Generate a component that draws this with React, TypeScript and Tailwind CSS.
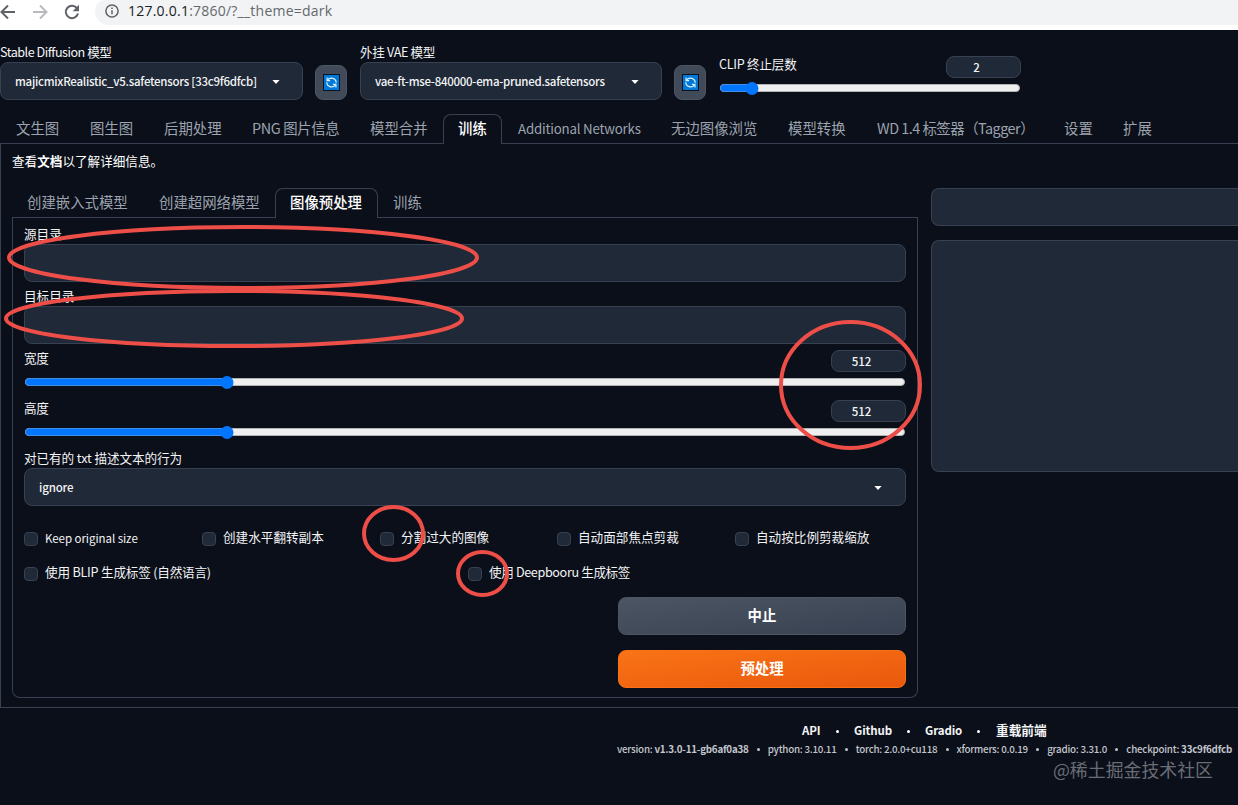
import React from 'react';
import { clsx } from 'clsx';

const Caret = ({ className }: { className?: string }) => (
  <svg viewBox="0 0 8 4" className={clsx('h-1 w-2 shrink-0 fill-white', className)}>
    <path d="M.4 0h7.2L4 4z" />
  </svg>
);

const RefreshButton = () => (
  <button className="flex h-[35px] w-8 shrink-0 items-start justify-center rounded-lg border border-[#4b5563] bg-[#414a58] pt-2">
    <svg viewBox="0 0 17 17" className="h-[17px] w-[17px]">
      <rect x="0.5" y="0.5" width="16" height="16" fill="#0078d7" stroke="#07111f" />
      <g fill="none" stroke="#d9f1ff" strokeWidth="1.2">
        <path d="M4.6 6.2A4.7 4.7 0 0 1 13.2 8.8M12.4 10.8A4.7 4.7 0 0 1 3.8 8.2" />
        <path d="M4.1 3.6v3h3M12.9 13.4v-3H9.9" />
      </g>
    </svg>
  </button>
);

const Label = ({ children, className }: { children: React.ReactNode; className?: string }) => (
  <div className={clsx('whitespace-nowrap text-[12.6px] text-[#f3f4f6]', className)}>{children}</div>
);

const Select = ({ value, className, caret }: { value: string; className?: string; caret: string }) => (
  <div className={clsx('flex h-[38px] items-center justify-between rounded-lg border border-[#374151] bg-[#1f2937] pl-3.5 text-[#f3f4f6]', caret)}>
    <span className={clsx('whitespace-nowrap pt-px text-[11.5px] font-medium', className)}>{value}</span>
    <Caret className="mt-0.5" />
  </div>
);

const Slider = ({ label, value, percent, className }: { label: string; value: string; percent: number; className?: string }) => (
  <div className={className}>
    <div className="flex h-[22px] items-start justify-between">
      <Label className="leading-4 tracking-[-0.25px]">{label}</Label>
      <div className="h-[22px] w-[75px] rounded-lg border border-[#374151] bg-[#1f2937] pr-3.5 text-center text-[11.5px] font-medium leading-5 text-[#f3f4f6]">
        {value}
      </div>
    </div>
    <div className="relative mx-px mt-1.5 h-2 rounded-full border border-[#b2b2b2] bg-[#efefef]">
      <div className="absolute -inset-y-px -left-px rounded-full border border-[#3f8fe8] bg-[#0075ff]" style={{ width: `${percent}%` }} />
      <div className="absolute -top-[3.5px] h-[13px] w-[13px] -translate-x-1/2 rounded-full bg-[#0075ff]" style={{ left: `${percent}%` }} />
    </div>
  </div>
);

const Checkbox = ({ label, className, text = 'text-[12.6px]' }: { label: string; className?: string; text?: string }) => (
  <div className={clsx('flex h-[15px] min-w-0 items-center', className)}>
    <span className="h-3.5 w-3.5 shrink-0 rounded-[4px] border border-[#374151] bg-[#1f2937]" />
    <span className={clsx('-mt-[3px] ml-[7px] whitespace-nowrap leading-4 text-[#f3f4f6]', text)}>{label}</span>
  </div>
);

const tabs = [
  { name: '文生图', cls: 'w-[75px] pl-4' },
  { name: '图生图', cls: 'w-[74px] pl-[15px]' },
  { name: '后期处理', cls: 'w-[88px] pl-[15px]' },
  { name: 'PNG 图片信息', cls: 'w-[118px] pl-[15px] tracking-[-0.35px]' },
  { name: '模型合并', cls: 'w-[88px] pl-[15px]' },
  { name: '训练', cls: 'w-[59px]', active: true },
  { name: 'Additional Networks', cls: 'w-[154px] pl-4 pt-px text-[13.3px] tracking-[-0.2px]' },
  { name: '无边图像浏览', cls: 'w-[117px] pl-[15px]' },
  { name: '模型转换', cls: 'w-[88px] pl-[15px]' },
  { name: 'WD 1.4 标签器（Tagger）', cls: 'w-[188px] pl-4 tracking-[-0.5px]' },
  { name: '设置', cls: 'w-[59px] pl-[15px]' },
  { name: '扩展', cls: 'flex-1 pl-[15px]' },
];

const trainTabs = [
  { name: '创建嵌入式模型', cls: 'w-[132px] pl-[15px]' },
  { name: '创建超网络模型', cls: 'w-[131px] pl-[15px]' },
  { name: '图像预处理', cls: 'w-[103px]', active: true },
  { name: '训练', cls: 'flex-1 pl-[15px]' },
];

const TabNav = ({ items }: { items: { name: string; cls: string; active?: boolean }[] }) => (
  <div className="flex h-[30px] text-[14.4px]">
    {items.map((tab, i) => (
      <div
        key={i}
        className={clsx(
          'shrink-0 whitespace-nowrap border-[#374151]',
          tab.cls,
          tab.active ? 'rounded-t-lg border border-b-0 pl-3.5 font-medium leading-[26px] text-white' : 'border-b leading-7 text-[#9ca3af]'
        )}
      >
        {tab.name}
      </div>
    ))}
  </div>
);

const links = [
  { name: 'API', cls: 'w-[52px]' },
  { name: 'Github', cls: 'w-[71px]' },
  { name: 'Gradio', cls: 'w-[70px]' },
];

const versions = [
  ['version: ', 'v1.3.0-11-gb6af0a38'],
  ['python: 3.10.11'],
  ['torch: 2.0.0+cu118'],
  ['xformers: 0.0.19'],
  ['gradio: 3.31.0'],
  ['checkpoint: ', '33c9f6dfcb'],
];

const BrowserBar = () => (
  <div className="flex h-[30px] bg-white">
    <div className="flex h-[23px] w-[95px] items-center gap-4 text-[#5f6368]">
      <svg viewBox="0 0 16 16" className="h-4 w-4 fill-none stroke-current stroke-2">
        <path d="M15 8H2M8 1.5 1.5 8 8 14.5" />
      </svg>
      <svg viewBox="0 0 16 16" className="h-4 w-4 fill-none stroke-[#b8babd] stroke-2">
        <path d="M1 8h13M8 1.5 14.5 8 8 14.5" />
      </svg>
      <svg viewBox="0 0 16 16" className="h-4 w-4 fill-none stroke-current stroke-2">
        <path d="M13.2 4.5A6.2 6.2 0 1 0 14 9.6" />
        <path className="fill-current stroke-none" d="M15 .8v6.4H8.6z" />
      </svg>
    </div>
    <div className="flex h-[25px] flex-1 items-center rounded-bl-[14px] rounded-tl-[10px] bg-[#f1f3f4] pb-[3px] pl-[10px]">
      <svg viewBox="0 0 14 14" className="h-3.5 w-3.5 fill-none stroke-[#5f6368] stroke-[1.5]">
        <circle cx="7" cy="7" r="6.1" />
        <path d="M7 6.2v4M7 3.6v1.5" />
      </svg>
      <span className="-mt-0.5 ml-[9px] font-['Open_Sans',sans-serif] text-[14px] tracking-[0.23px] text-[#65696d]">
        <span className="text-[#202124]">127.0.0.1</span>:7860/?__theme=dark
      </span>
    </div>
  </div>
);

const QuickSettings = () => (
  <div className="flex h-[84px]">
    <div className="w-[303px] pt-3.5">
      <Label className="h-[18px] leading-4 tracking-[-0.48px]">Stable Diffusion 模型</Label>
      <Select value="majicmixRealistic_v5.safetensors [33c9f6dfcb]" caret="pr-[22px]" className="tracking-[-0.26px]" />
    </div>
    <div className="ml-3 pt-[35px]"><RefreshButton /></div>
    <div className="ml-[13px] w-[302px] pt-3.5">
      <Label className="h-[18px] leading-4 tracking-[-0.35px]">外挂 VAE 模型</Label>
      <Select value="vae-ft-mse-840000-ema-pruned.safetensors" caret="pr-[22px]" className="tracking-[-0.28px]" />
    </div>
    <div className="ml-3 pt-[35px]"><RefreshButton /></div>
    <Slider label="CLIP 终止层数" value="2" percent={10.5} className="ml-[13px] w-[302px] pt-[26px]" />
  </div>
);

const PreprocessForm = () => (
  <div className="h-[480px] rounded-b-lg border border-t-0 border-[#374151] px-[11px] pt-2">
    <Label className="h-[18px] leading-4">源目录</Label>
    <div className="h-[38px] rounded-lg border border-[#374151] bg-[#1f2937]" />
    <Label className="mt-1.5 h-[18px] leading-4">目标目录</Label>
    <div className="h-[38px] rounded-lg border border-[#374151] bg-[#1f2937]" />
    <Slider label="宽度" value="512" percent={22.9} className="mt-1.5" />
    <Slider label="高度" value="512" percent={22.9} className="mt-3.5" />
    <Label className="mt-3.5 h-[18px] leading-4 tracking-[-0.08px]">对已有的 txt 描述文本的行为</Label>
    <Select value="ignore" caret="pr-[23px]" className="tracking-[-0.15px]" />
    <div className="mt-[25px] grid grid-cols-[178px_178px_177px_178px_1fr]">
      <Checkbox label="Keep original size" text="text-[11.5px] tracking-[-0.05px] pt-px" />
      <Checkbox label="创建水平翻转副本" />
      <Checkbox label="分割过大的图像" />
      <Checkbox label="自动面部焦点剪裁" />
      <Checkbox label="自动按比例剪裁缩放" />
    </div>
    <div className="mt-5 flex">
      <Checkbox label="使用 BLIP 生成标签 (自然语言)" className="w-[444px]" text="text-[12.6px] tracking-[-0.2px]" />
      <Checkbox label="使用 Deepbooru 生成标签" text="text-[12.6px] tracking-[-0.36px]" />
    </div>
    <div className="ml-auto mt-4 flex w-72 flex-col gap-[15px] text-[14.4px] font-bold text-white">
      <button className="h-[38px] rounded-lg border border-[#4b5563] bg-linear-to-br from-[#4b5563] to-[#374151] pb-[3px] leading-8">中止</button>
      <button className="h-[38px] rounded-lg border border-[#f97316] bg-linear-to-br from-[#f97316] to-[#ea580c] pb-[3px] leading-8">预处理</button>
    </div>
  </div>
);

const Footer = () => (
  <div className="flex flex-col text-[#f3f4f6]">
    <div className="ml-[802px] mt-3.5 flex h-[18px] items-center whitespace-nowrap text-[11.5px] font-bold">
      {links.map((link) => (
        <span key={link.name} className={clsx('flex shrink-0 items-center justify-between pr-[15px] tracking-[-0.1px]', link.cls)}>
          {link.name}
          <span className="h-[3px] w-[3px] rounded-full bg-white" />
        </span>
      ))}
      <span className="-mt-0.5 ml-px text-[12.7px] leading-4">重载前端</span>
    </div>
    <div className="ml-[617px] mr-[6px] flex h-[18px] items-center justify-between whitespace-nowrap text-[9.8px] font-medium tracking-[-0.24px] text-[#c3c6cd]">
      {versions.map(([text, strong], i) => (
        <React.Fragment key={i}>
          {i > 0 && <span className="h-[3px] w-[3px] rounded-full bg-[#c3c6cd]" />}
          <span className="whitespace-pre">{text}{strong && <b>{strong}</b>}</span>
        </React.Fragment>
      ))}
    </div>
    <div className="-mt-px mr-[25px] self-end text-[17.9px] leading-6 text-[#696d75]">@稀土掘金技术社区</div>
  </div>
);

const Annotations = () => (
  <svg viewBox="0 0 1238 805" className="pointer-events-none absolute inset-0 h-full w-full fill-none stroke-[#ed4e48] stroke-4">
    <ellipse cx="243" cy="257.5" rx="234" ry="30.5" />
    <ellipse cx="234" cy="318.5" rx="228" ry="27.5" />
    <ellipse cx="850.5" cy="385" rx="69.5" ry="63" />
    <ellipse cx="393.5" cy="533.5" rx="29.5" ry="26.5" />
    <ellipse cx="482.5" cy="573.5" rx="24.5" ry="21.5" />
  </svg>
);

export default function App() {
  return (
    <div className="relative h-[805px] w-[1238px] overflow-hidden bg-[#0b0f19] font-['Noto_Sans_CJK_SC',sans-serif]">
      <BrowserBar />
      <QuickSettings />
      <TabNav items={tabs} />
      <div className="flex h-[564px] gap-[13px] border-b border-l border-[#374151] pl-[11px]">
        <div className="w-[906px] shrink-0">
          <Label className="h-11 pt-2 leading-[18px] text-white">查看<b>文档</b>以了解详细信息。</Label>
          <TabNav items={trainTabs} />
          <PreprocessForm />
        </div>
        <div className="flex flex-1 flex-col gap-3.5 pt-11">
          <div className="h-[38px] rounded-l-lg border border-r-0 border-[#374151] bg-[#1f2937]" />
          <div className="h-[232px] rounded-l-lg border border-r-0 border-[#374151] bg-[#1f2937]" />
        </div>
      </div>
      <Footer />
      <Annotations />
    </div>
  );
}
